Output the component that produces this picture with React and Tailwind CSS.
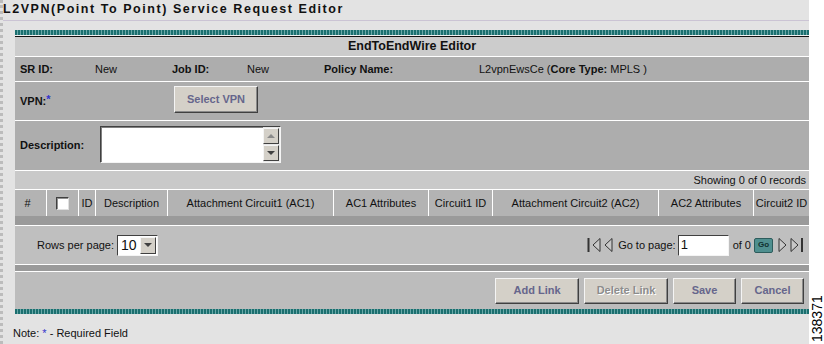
import React from "react";

const teal =
  "h-[5px] bg-[repeating-linear-gradient(90deg,#1b6f6f_0px,#1b6f6f_2px,#6aa8a8_2px,#6aa8a8_3px)]";

function Btn({ children, w, disabled }) {
  return (
    <div
      className={`${w} h-[26px] flex items-center justify-center bg-[#d4d0c8] border border-t-[#f4f4f4] border-l-[#f4f4f4] border-b-[#404040] border-r-[#404040] shadow-[inset_-1px_-1px_0_#8a8a8a] text-[11px] font-bold ${
        disabled ? "text-[#8c8c8c] [text-shadow:1px_1px_0_#ffffff]" : "text-[#66668c]"
      }`}
    >
      {children}
    </div>
  );
}

function Tri({ dir, bar }) {
  const pts = dir === "left" ? "8,1 1,7.5 8,14" : "1,1 8,7.5 1,14";
  return (
    <svg width={bar ? 14 : 9} height="16" viewBox={bar ? "0 0 14 16" : "0 0 9 16"}>
      {bar && dir === "left" && <rect x="0.5" y="1" width="2" height="14" fill="#333" />}
      <g transform={bar && dir === "left" ? "translate(5,0.5)" : "translate(0,0.5)"}>
        <polygon points={pts} fill="#c8c8c8" stroke="#333" strokeWidth="1" />
      </g>
      {bar && dir === "right" && <rect x="11" y="1" width="2" height="14" fill="#333" />}
    </svg>
  );
}

function ArrowBtn({ down, h = "h-[16px]" }) {
  return (
    <div
      className={`w-[16px] ${h} flex items-center justify-center bg-[#d4d0c8] border border-t-[#f4f4f4] border-l-[#f4f4f4] border-b-[#404040] border-r-[#404040]`}
    >
      <svg width="8" height="5" viewBox="0 0 8 5">
        <polygon points={down ? "0,0 8,0 4,4" : "0,4 8,4 4,0"} fill={down ? "#404040" : "#8a8a8a"} />
      </svg>
    </div>
  );
}

const cols = [
  ["w-[31px]", "#"],
  ["w-[32px]", "cb"],
  ["w-[17px]", "ID"],
  ["w-[72px]", "Description"],
  ["w-[166px]", "Attachment Circuit1 (AC1)"],
  ["w-[95px]", "AC1 Attributes"],
  ["w-[64px]", "Circuit1 ID"],
  ["w-[166px]", "Attachment Circuit2 (AC2)"],
  ["w-[95px]", "AC2 Attributes"],
  ["flex-1", "Circuit2 ID"],
];

export default function App() {
  return (
    <div className="w-[824px] h-[344px] bg-white flex font-['Liberation_Sans',Arial,sans-serif] text-[11px] text-[#111] relative overflow-hidden">
      <div className="w-[809px] h-[344px] bg-[#e3e3e3] border-l-[3px] border-dotted border-l-[#bcbcbc] flex flex-col">
        <div className="h-[20px] pt-[1px] leading-[16px] text-[12.5px] font-bold tracking-[1.55px] text-[#111] whitespace-nowrap">
          L2VPN(Point To Point) Service Request Editor
        </div>
        <div className="h-px bg-[#cbc4d4]" />
        <div className="h-[9px]" />
        <div className="ml-[12px] flex flex-col">
          <div className={teal} />
          <div className="h-px bg-[#f0f0f0]" />
          <div className="h-px bg-[#111]" />
          <div className="h-[19px] bg-[#cccccc] flex items-center justify-center text-[12.5px] font-bold">
            EndToEndWire Editor
          </div>
          <div className="h-px bg-white" />
          <div className="h-[24px] bg-[#adadad] flex items-center pl-[5px] whitespace-nowrap">
            <span className="w-[75px] font-bold">SR ID:</span>
            <span className="w-[77px]">New</span>
            <span className="w-[75px] font-bold">Job ID:</span>
            <span className="w-[77px]">New</span>
            <span className="w-[155px] font-bold">Policy Name:</span>
            <span>
              L2vpnEwsCe (<b>Core Type:</b> MPLS )
            </span>
          </div>
          <div className="h-px bg-white" />
          <div className="h-[38px] bg-[#adadad] flex items-center pl-[5px]">
            <span className="w-[154px] font-bold">
              VPN:<sup className="text-[#3333cc] font-bold text-[11px] relative top-[-2px]">*</sup>
            </span>
            <div className="mt-[-3px]">
              <Btn w="w-[84px] h-[27px]">Select VPN</Btn>
            </div>
          </div>
          <div className="h-px bg-white" />
          <div className="h-[49px] bg-[#adadad] flex items-center pl-[5px]">
            <span className="w-[80px] font-bold">Description:</span>
            <div className="w-[181px] h-[37px] bg-white border border-t-[#404040] border-l-[#404040] border-b-[#f4f4f4] border-r-[#f4f4f4] shadow-[inset_1px_1px_0_#808080] flex justify-end mt-[-2px]">
              <div className="flex flex-col justify-between pr-px py-px bg-[#e8e8e8]">
                <ArrowBtn />
                <ArrowBtn down />
              </div>
            </div>
          </div>
          <div className="h-px bg-white" />
          <div className="h-[18px] bg-[#c9c9c9] flex items-center justify-end pr-[3px]">
            Showing 0 of 0 records
          </div>
          <div className="h-px bg-white" />
          <div className="h-[26px] bg-[#b3b3b3] flex">
            {cols.map(([w, t], i) => (
              <div
                key={i}
                className={`${w} h-full flex items-center justify-center whitespace-nowrap ${
                  i > 0 ? "border-l border-white" : ""
                }`}
              >
                {t === "cb" ? (
                  <div className="w-[13px] h-[13px] bg-white border border-t-[#404040] border-l-[#404040] border-b-[#e0e0e0] border-r-[#e0e0e0] shadow-[inset_1px_1px_0_#909090]" />
                ) : t === "#" ? (
                  <span className="mr-[6px]">#</span>
                ) : (
                  t
                )}
              </div>
            ))}
          </div>
          <div className="h-[9px] bg-[#9a9a9a]" />
          <div className="h-px bg-white" />
          <div className="h-[38px] bg-[#bfbfbf] flex items-center justify-between pl-[22px] pr-[5px]">
            <div className="flex items-center gap-[3px]">
              <span>Rows per page:</span>
              <div className="w-[41px] h-[21px] bg-white border border-t-[#404040] border-l-[#404040] border-b-[#f4f4f4] border-r-[#f4f4f4] flex items-center justify-between pl-[3px] pr-px">
                <span className="text-[14px] leading-none">10</span>
                <ArrowBtn down h="h-[17px]" />
              </div>
            </div>
            <div className="flex items-center">
              <Tri dir="left" bar />
              <span className="w-[3px]" />
              <Tri dir="left" />
              <span className="ml-[5px]">Go to page:</span>
              <div className="ml-[2px] w-[51px] h-[21px] bg-white border border-t-[#404040] border-l-[#404040] border-b-[#f4f4f4] border-r-[#f4f4f4] flex items-center pl-[2px] text-[13px]">
                1
              </div>
              <span className="ml-[4px]">of 0</span>
              <div className="ml-[3px] w-[19px] h-[15px] rounded-[2px] bg-[#4f8f8f] border border-[#2d5c5c] flex items-center justify-center text-[8px] font-bold text-[#10302f]">
                Go
              </div>
              <span className="w-[5px]" />
              <Tri dir="right" />
              <span className="w-[3px]" />
              <Tri dir="right" bar />
            </div>
          </div>
          <div className="h-px bg-white" />
          <div className="h-[6px] bg-[#9a9a9a]" />
          <div className="h-px bg-white" />
          <div className="h-[37px] bg-[#bcbcbc] flex items-center justify-end gap-[5px] pr-[5px]">
            <Btn w="w-[84px]">Add Link</Btn>
            <Btn w="w-[84px]" disabled>
              Delete Link
            </Btn>
            <Btn w="w-[63px]">Save</Btn>
            <Btn w="w-[63px]">Cancel</Btn>
          </div>
          <div className={teal} />
        </div>
        <div className="pl-[10px] mt-[11px] whitespace-nowrap">
          Note: <span className="text-[#3333cc]">*</span> - Required Field
        </div>
      </div>
      <div className="absolute left-[811px] top-[342px] origin-top-left -rotate-90 text-[14px] leading-[13px] text-black whitespace-nowrap">
        138371
      </div>
    </div>
  );
}
